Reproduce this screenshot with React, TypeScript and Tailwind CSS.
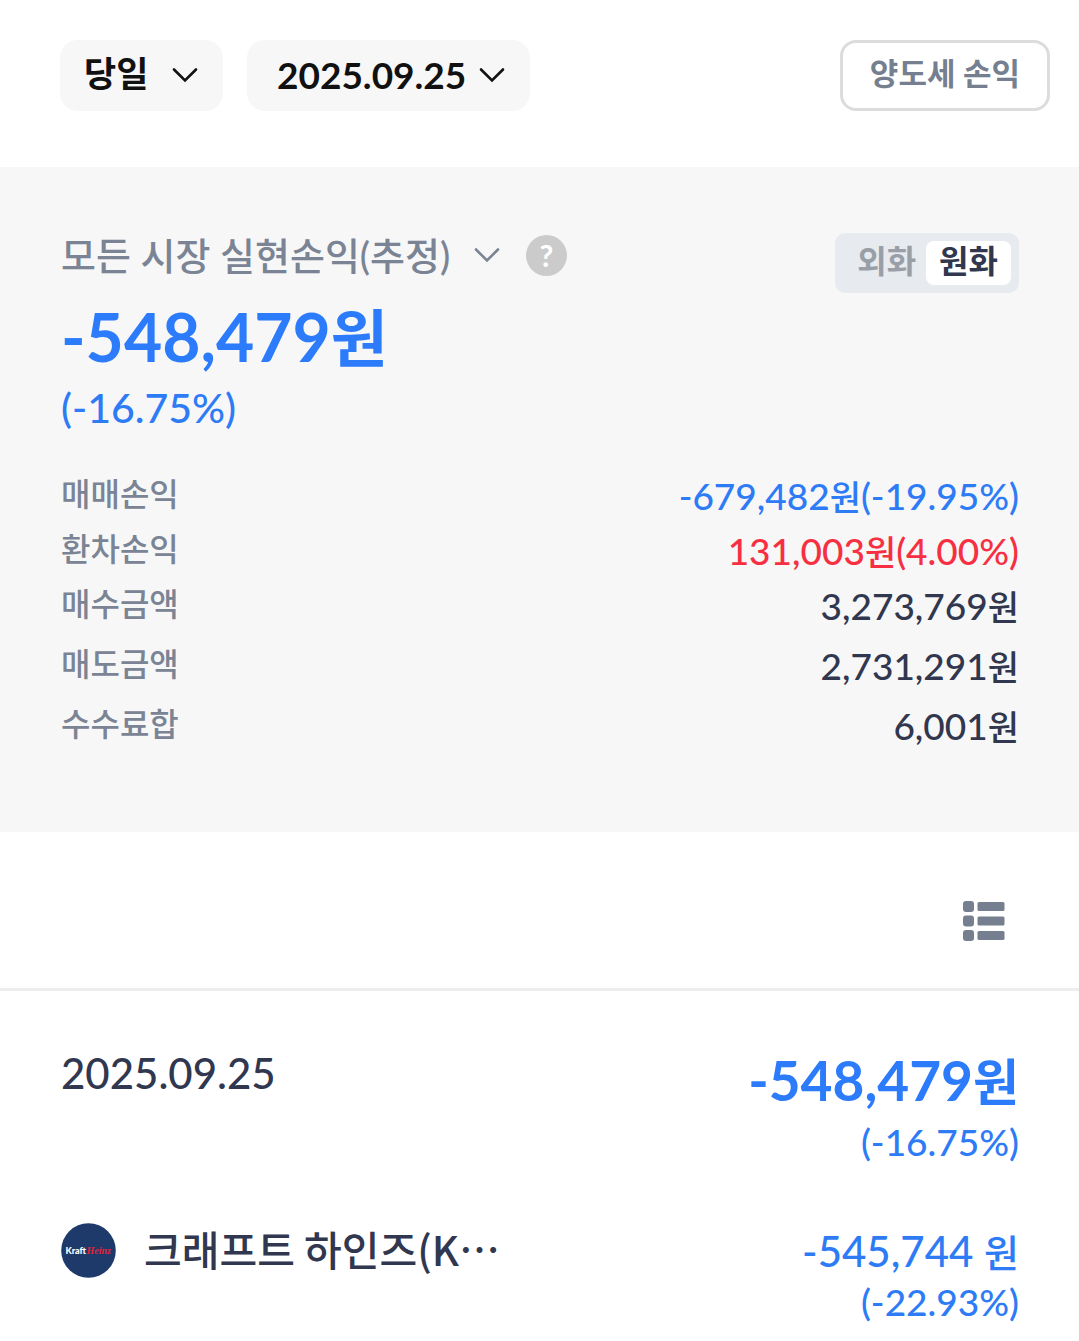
import { useState } from 'react';

const rows = [
  { label: '매매손익', amount: '-679,482', rate: '(-19.95%)', color: 'text-[#2e7bf6]', height: 'h-[55px]' },
  { label: '환차손익', amount: '131,003', rate: '(4.00%)', color: 'text-[#f62f42]', height: 'h-[55px]' },
  { label: '매수금액', amount: '3,273,769', rate: '', color: 'text-[#30374f]', height: 'h-[60px]' },
  { label: '매도금액', amount: '2,731,291', rate: '', color: 'text-[#30374f]', height: 'h-[60px]' },
  { label: '수수료합', amount: '6,001', rate: '', color: 'text-[#30374f]', height: 'h-[46px]' },
];

const Chevron = ({ className = '' }: { className?: string }) => (
  <svg className={`pointer-events-none h-4 w-7 shrink-0 ${className}`} viewBox="0 0 28 16" fill="none" aria-hidden="true">
    <path d="M3 2.5 14 13.5 25 2.5" stroke="currentColor" strokeWidth="2.6" strokeLinecap="round" />
  </svg>
);

// Hangul sits a little smaller than the Lato digits
const Won = ({ className }: { className: string }) => <span className={className}>원</span>;

const TopBar = () => (
  <header className="flex items-center justify-between pt-10 pr-[29px] pb-14 pl-[60px]">
    <div className="flex gap-6">
      <div className="relative">
        <select
          aria-label="조회 기간"
          className="h-[71px] w-[163px] appearance-none rounded-[18px] bg-[#f7f7f7] pb-1 pl-6 text-[35px] font-bold text-[#111]"
        >
          <option>당일</option>
          <option>1주일</option>
          <option>1개월</option>
        </select>
        <Chevron className="absolute top-[27px] right-6 text-[#111]" />
      </div>
      <button className="flex h-[71px] items-center gap-3 rounded-[18px] bg-[#f7f7f7] pr-6 pb-[2px] pl-[30px] text-[37px] font-bold text-[#111]">
        2025.09.25
        <Chevron />
      </button>
    </div>
    <button className="h-[71px] rounded-[16px] border-[3px] border-[#dcdcdc] px-[27px] pb-1 text-[31px] font-bold text-[#757f8f]">
      양도세 손익
    </button>
  </header>
);

const CurrencyToggle = () => {
  const [currency, setCurrency] = useState('원화');

  return (
    <div className="flex h-[60px] items-center gap-[2px] rounded-[10px] bg-[#e7eaef] pr-2 pl-[14px]">
      {['외화', '원화'].map(name => (
        <button
          key={name}
          aria-pressed={currency === name}
          onClick={() => setCurrency(name)}
          className={`flex h-11 items-center rounded-lg pb-1 text-[32px] font-bold ${
            currency === name ? 'bg-white px-[13px] text-[#30374f]' : 'px-2 text-[#999fa6]'
          }`}
        >
          {name}
        </button>
      ))}
    </div>
  );
};

const Summary = () => (
  <section className="bg-[#f7f7f7] pt-[60px] pr-[60px] pb-[84px] pl-[61px]">
    <div className="flex items-start justify-between">
      <div className="flex items-center">
        <div className="relative text-[#7b8494]">
          <select aria-label="손익 구분" className="mb-1 block h-[52px] w-[440px] appearance-none text-[38px] font-medium">
            <option>모든 시장 실현손익(추정)</option>
          </select>
          <Chevron className="absolute top-5 right-0" />
        </div>
        <button
          aria-label="도움말"
          className="ml-[25px] flex size-[41px] items-center justify-center rounded-full bg-[#cbcbcb] text-[30px] font-bold text-white"
        >
          ?
        </button>
      </div>
      <div className="pt-[6px]">
        <CurrencyToggle />
      </div>
    </div>
    <p className="mt-1 text-[66px] leading-[80px] font-bold text-[#2b7bfb]">
      -548,479<Won className="text-[62px]" />
    </p>
    <p className="text-[41px] leading-[60px] font-medium text-[#2e7bf6]">(-16.75%)</p>
    <dl className="mt-[34px]">
      {rows.map(row => (
        <div key={row.label} className={`flex items-start justify-between ${row.height}`}>
          <dt className="text-[32px] leading-[44px] font-medium text-[#7b8494]">{row.label}</dt>
          <dd className={`text-[37px] leading-[48px] font-medium ${row.color}`}>
            {row.amount}<Won className="text-[34px]" />{row.rate}
          </dd>
        </div>
      ))}
    </dl>
  </section>
);

const KraftHeinzLogo = () => (
  <svg className="size-[55px] shrink-0" viewBox="0 0 55 55" role="img" aria-label="Kraft Heinz">
    <circle cx="27.5" cy="27.5" r="27.3" fill="#1d3a6b" />
    <text x="4.5" y="30.5" fill="#fff" className="font-[Lato] text-[9px] font-black">Kraft</text>
    <text x="25.5" y="31" fill="#e0263a" className="font-['Liberation_Serif'] text-[10px] font-bold italic">Heinz</text>
  </svg>
);

const History = () => (
  <section>
    <div className="flex h-[159px] items-center justify-end border-b-[3px] border-[#ededed] pt-[22px] pr-[74px]">
      <button aria-label="목록 보기">
        <svg className="h-10 w-[42px] text-[#757f8f]" viewBox="0 0 42 40" fill="currentColor" aria-hidden="true">
          {[0, 14.5, 29].map(y => (
            <g key={y}>
              <rect x="0" y={y} width="11" height="11" rx="3" />
              <rect x="14.5" y={y + 1} width="27" height="9" rx="1.5" />
            </g>
          ))}
        </svg>
      </button>
    </div>
    <div className="flex items-start justify-between pt-[54px] pr-[60px] pl-[61px]">
      <h2 className="text-[42px] leading-[56px] font-medium text-[#30374f]">2025.09.25</h2>
      <div className="text-right text-[#2b7bfb]">
        <p className="text-[55px] leading-[70px] font-bold">
          -548,479<Won className="text-[50px]" />
        </p>
        <p className="text-[37px] leading-[50px] font-medium text-[#2e7bf6]">(-16.75%)</p>
      </div>
    </div>
    <div className="flex items-start justify-between pt-14 pr-[60px] pl-[61px]">
      <div className="flex items-start gap-7">
        <KraftHeinzLogo />
        <span className="font-['Noto_Sans_CJK_KR'] text-[41px] leading-[50px] font-medium text-[#30374f]">
          크래프트 하인즈(K<span className="font-['Noto_Sans_CJK_JP']" lang="ja">…</span>
        </span>
      </div>
      <div className="text-right font-medium text-[#2e7bf6]">
        <p className="text-[42px] leading-[56px]">
          -545,744 <Won className="text-[38px]" />
        </p>
        <p className="text-[37px] leading-[44px]">(-22.93%)</p>
      </div>
    </div>
  </section>
);

const App = () => (
  <main className="min-h-screen bg-white font-[Lato,'Noto_Sans_CJK_KR',sans-serif]">
    <TopBar />
    <Summary />
    <History />
  </main>
);

export default App;
